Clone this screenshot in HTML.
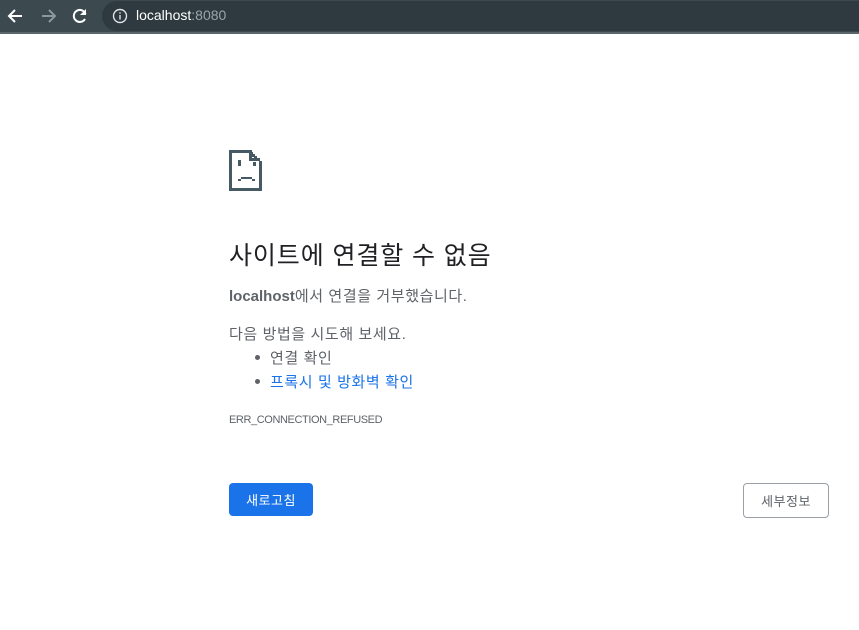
<!DOCTYPE html>
<html><head><meta charset="utf-8"><style>
body{margin:0;width:859px;height:630px;background:#fff;font-family:"Liberation Sans","Noto Sans CJK KR",sans-serif;position:relative;overflow:hidden;color:#5f6368}
.bar{position:absolute;left:0;top:0;width:859px;height:32px;background:#3c4a50;border-bottom:2px solid #5a666b}
.addr{position:absolute;left:102px;top:1px;width:780px;height:30px;border-radius:15px;background:#2e3a3f}
.t{position:absolute;white-space:nowrap}
.btn{position:absolute;box-sizing:border-box;border-radius:4px;font-size:13px;display:flex;align-items:center;justify-content:center;letter-spacing:0.5px}
.b{position:absolute;width:5px;height:5px;border-radius:50%;background:#5f6368;left:255px}
</style></head><body>
<div class="bar">
<svg style="position:absolute;left:6px;top:6px" width="20" height="20" viewBox="0 0 20 20"><path d="M16 10H4M9 4L3 10l6 6" stroke="#fff" stroke-width="2" fill="none"/></svg>
<svg style="position:absolute;left:38px;top:6px" width="20" height="20" viewBox="0 0 20 20"><path d="M4 10h12M11 4l6 6-6 6" stroke="#8e979a" stroke-width="2" fill="none"/></svg>
<svg style="position:absolute;left:70px;top:6px" width="20" height="20" viewBox="0 0 20 20"><path d="M15.5 8A6 6 0 1 0 15 13" stroke="#fff" stroke-width="2" fill="none"/><path d="M16 3v6h-6z" fill="#fff"/></svg>
<div class="addr"></div>
<svg style="position:absolute;left:112px;top:8px" width="16" height="16" viewBox="0 0 16 16"><circle cx="8" cy="8" r="6.5" stroke="#dfe3e5" stroke-width="1.4" fill="none"/><rect x="7.3" y="7" width="1.4" height="4.5" fill="#dfe3e5"/><rect x="7.3" y="4.3" width="1.4" height="1.4" fill="#dfe3e5"/></svg>
<div class="t" style="left:136px;top:7px;font-size:14px;color:#fff">localhost<span style="color:#9aa6ab">:8080</span></div>
</div>
<svg style="position:absolute;left:229px;top:150px" width="34" height="41" viewBox="0 0 34 41" fill="#455a64">
<rect x="0" y="0" width="3" height="41"/><rect x="0" y="38" width="33" height="3"/><rect x="30" y="11" width="3" height="30"/><rect x="0" y="0" width="21" height="3"/>
<rect x="21" y="2" width="3" height="3"/><rect x="23" y="4" width="3" height="3"/><rect x="25" y="6" width="3" height="3"/><rect x="27" y="8" width="3" height="3"/>
<rect x="20" y="0" width="3" height="11"/><rect x="20" y="8" width="11" height="3"/>
<rect x="9" y="10" width="3" height="6"/><rect x="24" y="12" width="3" height="4"/>
<rect x="12" y="27" width="11" height="2"/><rect x="9" y="29" width="3" height="2"/><rect x="23" y="29" width="3" height="2"/>
</svg>
<div class="t" style="left:229px;top:236px;font-size:25px;letter-spacing:0.9px;color:#202124">사이트에 연결할 수 없음</div>
<div class="t" style="left:229px;top:285px;font-size:15px;letter-spacing:0.6px"><b style="color:#5f6368;letter-spacing:0">localhost</b>에서 연결을 거부했습니다.</div>
<div class="t" style="left:229px;top:323px;font-size:15px;letter-spacing:0.6px">다음 방법을 시도해 보세요.</div>
<div class="b" style="top:355px"></div>
<div class="t" style="left:270px;top:347px;font-size:15px;letter-spacing:0.6px">연결 확인</div>
<div class="b" style="top:379px"></div>
<div class="t" style="left:270px;top:371px;font-size:15px;letter-spacing:0.6px;color:#1a73e8">프록시 및 방화벽 확인</div>
<div class="t" style="left:229px;top:414px;font-size:11px;letter-spacing:-0.4px">ERR_CONNECTION_REFUSED</div>
<div class="btn" style="left:229px;top:483px;width:84px;height:33px;background:#1a73e8;color:#fff">새로고침</div>
<div class="btn" style="left:743px;top:483px;width:86px;height:35px;border:1px solid #9aa0a6;color:#5f6368">세부정보</div>
</body></html>
